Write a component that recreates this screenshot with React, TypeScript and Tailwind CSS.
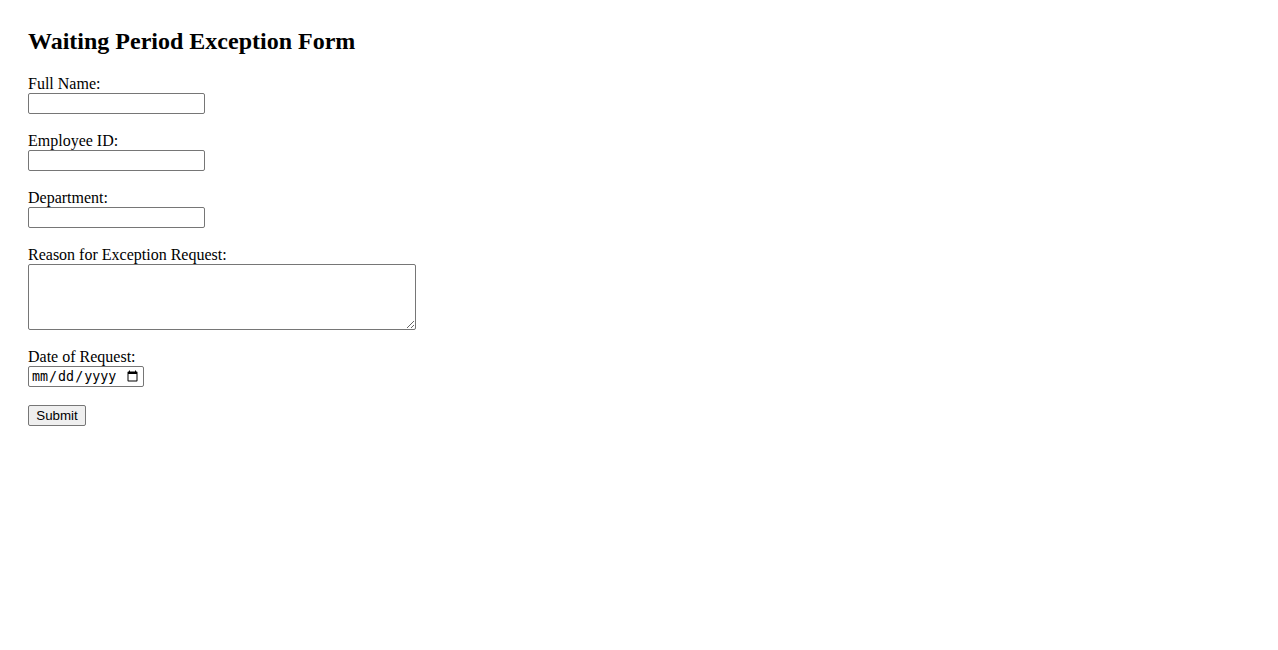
export default function App() {
  return (
    <div className="min-h-[650px] bg-white pl-[28px] pt-[27px] text-black font-['Liberation_Serif',serif]">
      <h2 className="text-[24px] font-bold leading-[28px]">Waiting Period Exception Form</h2>
      <form className="mt-[20px] flex flex-col items-start" onSubmit={(e) => e.preventDefault()}>
        <label htmlFor="fullName" className="text-[16px] leading-[18px]">Full Name:</label>
        <input
          id="fullName"
          type="text"
          className="h-[21px] w-[177px] rounded-[2px] border border-[#767676] bg-white px-[2px] text-[13.33px] font-['Liberation_Sans',sans-serif]"
        />

        <label htmlFor="employeeId" className="mt-[18px] text-[16px] leading-[18px]">Employee ID:</label>
        <input
          id="employeeId"
          type="text"
          className="h-[21px] w-[177px] rounded-[2px] border border-[#767676] bg-white px-[2px] text-[13.33px] font-['Liberation_Sans',sans-serif]"
        />

        <label htmlFor="department" className="mt-[18px] text-[16px] leading-[18px]">Department:</label>
        <input
          id="department"
          type="text"
          className="h-[21px] w-[177px] rounded-[2px] border border-[#767676] bg-white px-[2px] text-[13.33px] font-['Liberation_Sans',sans-serif]"
        />

        <label htmlFor="reason" className="mt-[18px] text-[16px] leading-[18px]">Reason for Exception Request:</label>
        <textarea
          id="reason"
          className="h-[66px] w-[388px] rounded-[2px] border border-[#767676] bg-white p-[2px] text-[13.33px] font-['DejaVu_Sans_Mono',monospace]"
        />

        <label htmlFor="date" className="mt-[18px] text-[16px] leading-[18px]">Date of Request:</label>
        <input
          id="date"
          type="date"
          className="h-[21px] w-[116px] rounded-[2px] border border-[#767676] bg-white px-[2px] text-[13.33px] font-['DejaVu_Sans_Mono',monospace]"
        />

        <button
          type="submit"
          className="mt-[18px] h-[21px] w-[58px] rounded-[2px] border border-[#767676] bg-[#efefef] text-[13.33px] font-['Liberation_Sans',sans-serif]"
        >
          Submit
        </button>
      </form>
    </div>
  );
}
